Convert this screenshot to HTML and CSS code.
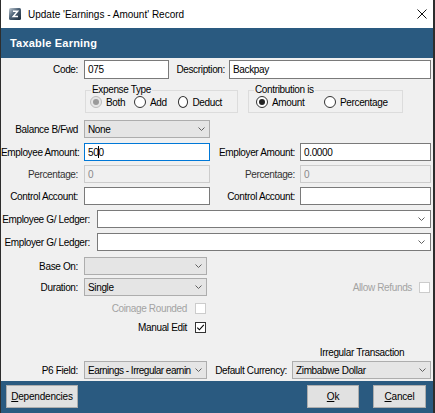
FILE: index.html
```html
<!doctype html>
<html lang="en">
<head>
  <meta charset="UTF-8">
  <title>Update 'Earnings - Amount' Record</title>
  <link rel="stylesheet" href="styles.css">
</head>
<body>
<div class="window">
  <div class="titlebar">
    <svg class="appicon" viewBox="0 0 12 12">
      <defs>
        <linearGradient id="icon_fill" x1="0" y1="0" x2="1" y2="1">
          <stop offset="0" stop-color="#c3ccd4"/>
          <stop offset="0.45" stop-color="#4d6276"/>
          <stop offset="1" stop-color="#1b2b3b"/>
        </linearGradient>
      </defs>
      <rect x="0" y="0" width="12" height="12" rx="1.5" fill="url(#icon_fill)"/>
      <path d="M4 3.2h4.6l-4.4 5.3h4.8" fill="none" stroke="#fff" stroke-width="1.5"/>
    </svg>
    <span class="title">Update 'Earnings - Amount' Record</span>
    <svg class="close" viewBox="0 0 10 10">
      <path d="M0.5 0.5l9 9M9.5 0.5l-9 9" stroke="#111" stroke-width="1"/>
    </svg>
  </div>

  <div class="banner">Taxable Earning</div>

  <form class="record">
    <div class="row r-code">
      <label class="lbl">Code:</label>
      <div class="tb code">075</div>
      <label class="lbl desc">Description:</label>
      <div class="tb desc_box">Backpay</div>
    </div>

    <div class="groups">
      <fieldset class="grp expense">
        <legend>Expense Type</legend>
        <div class="opts">
          <span class="opt"><i class="radio off on"></i>Both</span>
          <span class="opt"><i class="radio"></i>Add</span>
          <span class="opt"><i class="radio"></i>Deduct</span>
        </div>
      </fieldset>
      <fieldset class="grp contrib">
        <legend>Contribution is</legend>
        <div class="opts">
          <span class="opt"><i class="radio on"></i>Amount</span>
          <span class="opt"><i class="radio"></i>Percentage</span>
        </div>
      </fieldset>
    </div>

    <div class="row r-balance">
      <label class="lbl">Balance B/Fwd</label>
      <div class="cb half"><span class="val">None</span><svg class="chev" viewBox="0 0 7 4"><polyline points="0.5,0.5 3.5,3.5 6.5,0.5"/></svg></div>
    </div>

    <div class="row r-amount">
      <label class="lbl">Employee Amount:</label>
      <div class="tb half focus">50<span class="caret"></span>0</div>
      <label class="lbl right">Employer Amount:</label>
      <div class="tb wide">0.0000</div>
    </div>

    <div class="row r-pct">
      <label class="lbl dim">Percentage:</label>
      <div class="tb half off">0</div>
      <label class="lbl right dim">Percentage:</label>
      <div class="tb wide off">0</div>
    </div>

    <div class="row r-ctrl">
      <label class="lbl">Control Account:</label>
      <div class="tb half"></div>
      <label class="lbl right">Control Account:</label>
      <div class="tb wide"></div>
    </div>

    <div class="row r-empgl">
      <label class="lbl gl">Employee G/ Ledger:</label>
      <div class="cb edit full"><span class="val"></span><svg class="chev" viewBox="0 0 7 4"><polyline points="0.5,0.5 3.5,3.5 6.5,0.5"/></svg></div>
    </div>

    <div class="row r-emprgl">
      <label class="lbl gl">Employer G/ Ledger:</label>
      <div class="cb edit full"><span class="val"></span><svg class="chev" viewBox="0 0 7 4"><polyline points="0.5,0.5 3.5,3.5 6.5,0.5"/></svg></div>
    </div>

    <div class="row r-base">
      <label class="lbl">Base On:</label>
      <div class="cb short"><span class="val"></span><svg class="chev" viewBox="0 0 7 4"><polyline points="0.5,0.5 3.5,3.5 6.5,0.5"/></svg></div>
    </div>

    <div class="row r-dur">
      <label class="lbl">Duration:</label>
      <div class="cb short"><span class="val">Single</span><svg class="chev" viewBox="0 0 7 4"><polyline points="0.5,0.5 3.5,3.5 6.5,0.5"/></svg></div>
      <span class="allow grey">Allow Refunds</span>
      <i class="check off"></i>
    </div>

    <div class="row checkrow r-coin">
      <span class="grey">Coinage Rounded</span>
      <i class="check off"></i>
    </div>

    <div class="row checkrow r-manual">
      <span>Manual Edit</span>
      <i class="check"><svg viewBox="0 0 9 9"><polyline points="1.3,4.6 3.4,6.8 7.8,1.8"/></svg></i>
    </div>

    <div class="row r-irreg">Irregular Transaction</div>

    <div class="row r-p6">
      <label class="lbl">P6 Field:</label>
      <div class="cb short"><span class="val tight">Earnings - Irregular earnin</span><svg class="chev" viewBox="0 0 7 4"><polyline points="0.5,0.5 3.5,3.5 6.5,0.5"/></svg></div>
      <label class="lbl currency">Default Currency:</label>
      <div class="cb cur"><span class="val">Zimbabwe Dollar</span><svg class="chev" viewBox="0 0 7 4"><polyline points="0.5,0.5 3.5,3.5 6.5,0.5"/></svg></div>
    </div>
  </form>

  <div class="buttons">
    <div class="btn dep"><u>D</u>ependencies</div>
    <div class="btn ok"><u>O</u>k</div>
    <div class="btn cancel"><u>C</u>ancel</div>
  </div>
</div>
</body>
</html>
```

FILE: styles.css
```css
body { margin: 0; background: #f0f0f0; font-family: "Liberation Sans", Arial, sans-serif; font-size: 10px; letter-spacing: -0.35px; color: #000; }

.window { width: 432px; height: 413px; border-left: 1px solid #2d2d2d; border-right: 2px solid #2d2d2d; display: flex; flex-direction: column; }

/* title bar */
.titlebar { height: 28px; flex: none; background: #fff; display: flex; align-items: center; }
.appicon { width: 12px; height: 12px; margin-left: 8px; flex: none; }
.title { margin-left: 7px; letter-spacing: 0; margin-top: 1px; }
.close { width: 10px; height: 10px; margin-left: auto; margin-right: 6px; margin-top: -1px; }

.banner { height: 30px; flex: none; background: #2a5a80; color: #fff; font-weight: bold; font-size: 11px; letter-spacing: 0.2px; padding-left: 9px; display: flex; align-items: center; }

/* form body */
.record { height: 323px; flex: none; margin: 0; display: flex; flex-direction: column; overflow: hidden; }
.row { display: flex; align-items: center; height: 18px; flex: none; white-space: nowrap; }

.lbl { width: 77px; flex: none; text-align: right; }
.lbl.desc { width: 56px; }
.lbl.right { width: 85px; }
.lbl.gl { width: 89px; }
.lbl.currency { width: 80px; }
.dim { color: #333; }
.grey { color: #a3a3a3; }

/* text boxes */
.tb { height: 100%; box-sizing: border-box; flex: none; border: 1px solid #7a7a7a; background: #fff; padding: 0 3px; display: flex; align-items: center; overflow: hidden; }
.tb.code { width: 85px; margin-left: 6px; }
.tb.desc_box { width: 202px; margin-left: 4px; }
.tb.half { width: 126px; margin-left: 6px; }
.tb.wide { width: 131px; margin-left: 5px; }
.tb.focus { border-color: #0078d7; }
.tb.off { background: #f0f0f0; border-color: #cccccc; color: #8a8a8a; }
.caret { display: inline-block; width: 0; height: 12px; border-left: 1px solid #000; margin: 0 -1px 0 0; }

/* combo boxes */
.cb { height: 100%; box-sizing: border-box; flex: none; border: 1px solid #adadad; background: #e5e5e5; padding: 0 4px 0 3px; display: flex; align-items: center; }
.cb.edit { background: #fff; border-color: #7a7a7a; padding-right: 5px; }
.cb .val { flex: 1; overflow: hidden; }
.cb .val.tight { letter-spacing: -0.5px; }
.chev { width: 7px; height: 4px; flex: none; margin-left: 2px; fill: none; stroke: #606060; stroke-width: 1; }
.cb.half { width: 126px; margin-left: 6px; }
.cb.full { width: 334px; margin-left: 7px; }
.cb.short { width: 123px; margin-left: 6px; }
.cb.cur { width: 139px; margin-left: 5px; }

/* group boxes */
.groups { display: flex; flex: none; margin-top: 5px; padding-left: 84px; }
.grp { margin: 0; padding: 0 0 4px 5px; border: 1px solid #dcdcdc; box-sizing: border-box; min-width: 0; }
.grp legend { padding: 0 1px; line-height: 12px; }
.grp.expense { width: 153px; }
.grp.contrib { width: 155px; margin-left: 10px; }
.opts { display: flex; height: 12px; align-items: center; }
.expense .opts { margin-left: -1px; }
.contrib .opts { margin-left: 2px; }
.opt { display: flex; align-items: center; width: 44px; flex: none; }
.contrib .opt { width: 68px; }
.radio { width: 12px; height: 12px; box-sizing: border-box; border: 1px solid #333; border-radius: 50%; background: #fff; margin-right: 4px; display: flex; align-items: center; justify-content: center; }
.radio.on::after { content: ""; width: 6px; height: 6px; border-radius: 50%; background: #222; }
.radio.off { border-color: #bcbcbc; background: #e6e6e6; }
.radio.off.on::after { background: #9a9a9a; }

/* checkboxes */
.check { width: 11px; height: 11px; box-sizing: border-box; flex: none; border: 1px solid #333; background: #fff; display: flex; }
.check.off { border-color: #cccccc; }
.check svg { width: 9px; height: 9px; fill: none; stroke: #000; stroke-width: 1.1; }
.checkrow { width: 205px; justify-content: flex-end; height: 12px; }
.checkrow .check { margin-left: 8px; }
.allow { margin-left: auto; }
.r-dur .check { margin-left: 7px; margin-right: 3px; }

/* row spacing */
.r-code { height: 19px; margin-top: 2px; }
.r-balance { margin-top: 7px; }
.r-amount { margin-top: 5px; }
.r-pct { margin-top: 4px; }
.r-ctrl { margin-top: 4px; }
.r-empgl { margin-top: 5px; }
.r-emprgl { margin-top: 5px; }
.r-base { margin-top: 6px; }
.r-dur { margin-top: 3px; }
.r-coin { margin-top: 6px; }
.r-manual { margin-top: 7px; }
.r-irreg { margin-top: 13px; height: 12px; margin-left: 291px; width: 140px; justify-content: center; }
.r-p6 { margin-top: 3px; }

/* bottom buttons */
.buttons { height: 32px; flex: none; box-sizing: border-box; padding-top: 4px; background: #2a5a80; display: flex; align-items: flex-start; }
.btn { height: 23px; box-sizing: border-box; border: 1px solid #adadad; background: #e1e1e1; display: flex; align-items: center; justify-content: center; letter-spacing: -0.2px; }
.btn.dep { width: 72px; margin-left: 5px; }
.btn.ok { width: 52px; margin-left: auto; }
.btn.cancel { width: 53px; margin-left: 14px; margin-right: 7px; }
```
